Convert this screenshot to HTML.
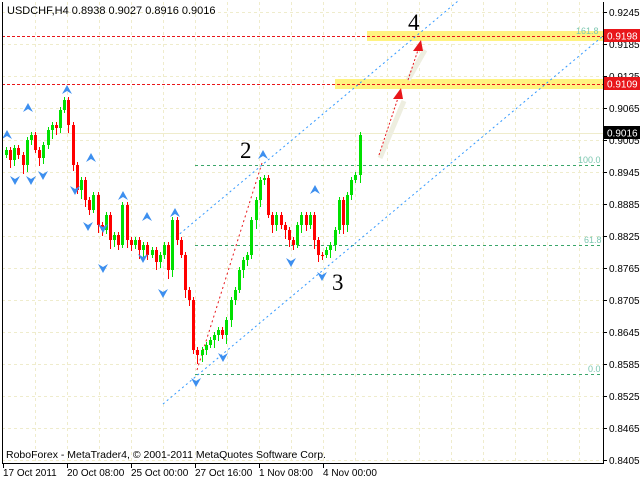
<!DOCTYPE html>
<html><head><meta charset="utf-8"><style>
html,body{margin:0;padding:0;background:#fff;}
svg{display:block;font-family:"Liberation Sans",sans-serif;}
</style></head><body>
<svg id="c" width="640" height="480" viewBox="0 0 640 480" xmlns="http://www.w3.org/2000/svg">
<rect width="640" height="480" fill="#fff"/>
<g id="grid" stroke="#efeccc" stroke-dasharray="3,3" stroke-width="1"></g>
<line x1="2" y1="133.5" x2="603" y2="133.5" stroke="#efeccc" stroke-width="1"/>
<rect x="367" y="31" width="236" height="10" fill="#fff380"/>
<rect x="335" y="79" width="268" height="10" fill="#fff380"/>
<line x1="2" y1="36.5" x2="603" y2="36.5" stroke="#e8161a" stroke-dasharray="3,2"/>
<line x1="2" y1="84.5" x2="603" y2="84.5" stroke="#e8161a" stroke-dasharray="3,2"/>
<g stroke="#3aa66a" stroke-dasharray="3,3">
<line x1="195" y1="165.5" x2="600" y2="165.5"/>
<line x1="195" y1="245.5" x2="600" y2="245.5"/>
<line x1="195" y1="374.5" x2="600" y2="374.5"/>
</g>
<g fill="#7cc7b0" font-size="9">
<text x="576" y="34">161.8</text>
<text x="578" y="163">100.0</text>
<text x="584" y="243">61.8</text>
<text x="588" y="372">0.0</text>
</g>
<g stroke="#3399ff" stroke-dasharray="2,3" stroke-width="1">
<line x1="176" y1="237" x2="458" y2="1"/>
<line x1="163" y1="404" x2="603" y2="36"/>
</g>
<line x1="197" y1="370" x2="262" y2="163" stroke="#e8161a" stroke-dasharray="2,3"/>
<g id="candles"></g>
<g id="fr" fill="#3d8fef"></g>
<g>
<line x1="380" y1="158" x2="404" y2="101" stroke="#eeeee0" stroke-width="5"/>
<line x1="408" y1="80" x2="425" y2="50" stroke="#eeeee0" stroke-width="5"/>
<line x1="379" y1="155" x2="398" y2="98" stroke="#e8161a" stroke-dasharray="2,2"/>
<polygon points="401,88 393,99 403,99" fill="#e8161a"/>
<line x1="408" y1="80" x2="418" y2="50" stroke="#e8161a" stroke-dasharray="2,2"/>
<polygon points="421,40 413,51 423,51" fill="#e8161a"/>
</g>
<g font-family="'Liberation Serif',serif" font-size="23" fill="#000">
<text x="240" y="158">2</text>
<text x="332" y="290">3</text>
<text x="408" y="30">4</text>
</g>
<line x1="2.5" y1="2" x2="2.5" y2="463" stroke="#000"/>
<line x1="603.5" y1="2" x2="603.5" y2="464" stroke="#000"/>
<line x1="2" y1="463.5" x2="604" y2="463.5" stroke="#000"/>
<g id="ax" font-size="10" fill="#000"></g>
<rect x="604" y="29" width="36" height="13" fill="#e8161a"/>
<text x="607" y="39.5" font-size="10" fill="#fff">0.9198</text>
<rect x="604" y="77" width="36" height="13" fill="#e8161a"/>
<text x="607" y="87.5" font-size="10" fill="#fff">0.9109</text>
<rect x="604" y="126" width="36" height="13" fill="#000"/>
<text x="607" y="136.5" font-size="10" fill="#fff">0.9016</text>
<text x="7" y="14" font-size="11" fill="#000">USDCHF,H4  0.8938 0.9027 0.8916 0.9016</text>
<text x="6" y="458" font-size="10.5" fill="#000">RoboForex - MetaTrader4, © 2001-2011 MetaQuotes Software Corp.</text>
<g font-size="10" fill="#000">
<text x="3" y="476">17 Oct 2011</text>
<text x="67" y="476">20 Oct 08:00</text>
<text x="131" y="476">25 Oct 00:00</text>
<text x="195" y="476">27 Oct 16:00</text>
<text x="259" y="476">1 Nov 08:00</text>
<text x="323" y="476">4 Nov 00:00</text>
</g>
<g stroke="#000"><line x1="3.5" y1="464" x2="3.5" y2="468"/><line x1="67.5" y1="464" x2="67.5" y2="468"/><line x1="131.5" y1="464" x2="131.5" y2="468"/><line x1="195.5" y1="464" x2="195.5" y2="468"/><line x1="259.5" y1="464" x2="259.5" y2="468"/><line x1="323.5" y1="464" x2="323.5" y2="468"/></g>
</svg>
<script>
(function(){
var NS="http://www.w3.org/2000/svg";
function el(p,t,a){var e=document.createElementNS(NS,t);for(var k in a)e.setAttribute(k,a[k]);p.appendChild(e);return e;}
var g=document.getElementById('grid');
for(var x=35;x<603;x+=32)el(g,'line',{x1:x+.5,y1:2,x2:x+.5,y2:463});
var ax=document.getElementById('ax');
var prices=["0.9245","0.9185","0.9125","0.9065","0.9005","0.8945","0.8885","0.8825","0.8765","0.8705","0.8645","0.8585","0.8525","0.8465","0.8405"];
for(var i=0;i<15;i++){var y=12+i*32;el(g,'line',{x1:2,y1:y+.5,x2:603,y2:y+.5});
el(ax,'line',{x1:603,y1:y+.5,x2:607,y2:y+.5,stroke:'#000'});
var t=el(ax,'text',{x:609,y:y+4});t.textContent=prices[i];}
var cl=[150,160,148,155,165,140,135,150,158,145,130,125,128,110,100,125,165,190,180,200,210,195,225,230,215,240,235,245,205,240,245,240,250,245,255,250,262,255,245,270,220,240,255,290,300,350,355,350,345,340,335,330,335,320,300,290,270,260,255,220,200,180,178,215,225,215,225,230,240,245,225,215,225,215,240,255,255,250,245,230,200,225,195,180,175,135];
var cg=document.getElementById('candles');var o=155;
for(var i=0;i<cl.length;i++){var cx=Math.round(6+i*4.16);var c=cl[i];var up=c<o;var col=up?'#00e000':'#ff0000';
var tp=Math.min(o,c),bt=Math.max(o,c);var wt=tp-3-(i*7%7),wb=bt+3+(i*5%7);
el(cg,'line',{x1:cx+.5,y1:wt,x2:cx+.5,y2:wb,stroke:col});
el(cg,'rect',{x:cx-1,y:tp,width:3,height:Math.max(1,bt-tp),fill:col});o=c;}
var fr=document.getElementById('fr');
var ups=[[7,135],[28,108],[67,90],[91,158],[123,196],[147,217],[175,213],[263,155],[315,190]];
var dns=[[15,180],[31,180],[43,175],[75,190],[88,226],[103,228],[143,258],[163,293],[103,268],[196,382],[223,357],[291,262],[322,276]];
ups.forEach(function(p){el(fr,'polygon',{points:(p[0]-5)+','+(p[1]+4)+' '+p[0]+','+(p[1]-5)+' '+(p[0]+5)+','+(p[1]+4)+' '+p[0]+','+(p[1]+1)});});
dns.forEach(function(p){el(fr,'polygon',{points:(p[0]-5)+','+(p[1]-4)+' '+p[0]+','+(p[1]-1)+' '+(p[0]+5)+','+(p[1]-4)+' '+p[0]+','+(p[1]+5)});});
})();
</script>
</body></html>
